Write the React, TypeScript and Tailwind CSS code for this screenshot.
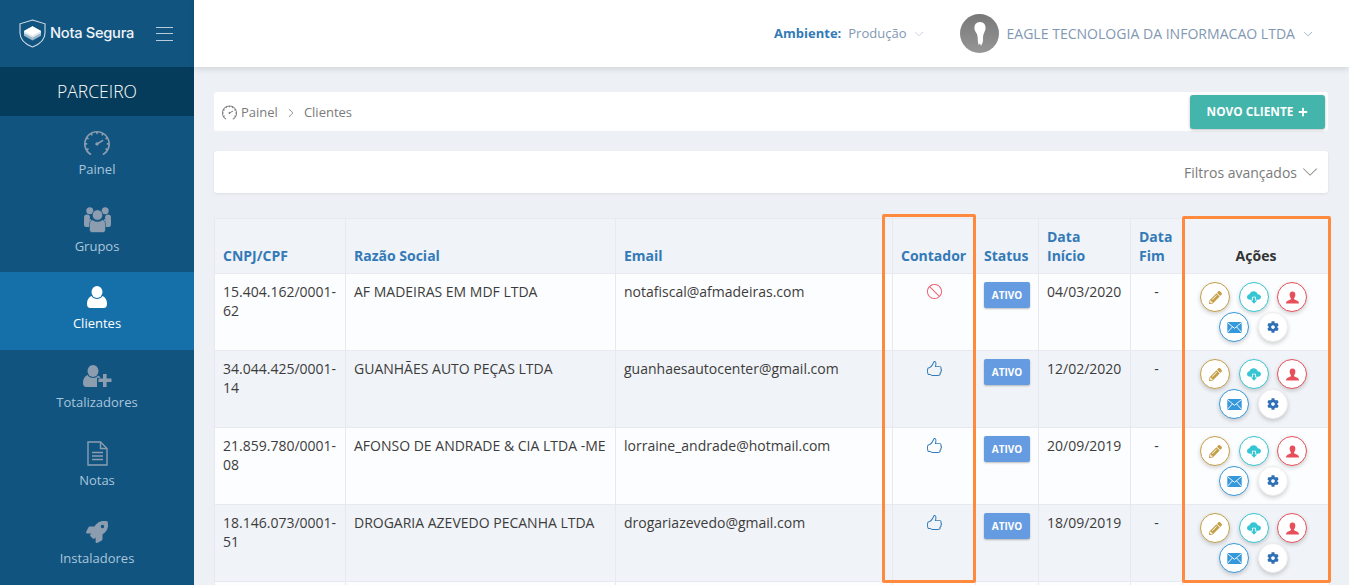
import React from "react";
import { FaRocket, FaPencilAlt, FaCog, FaPlus } from "react-icons/fa";
import { SlSpeedometer, SlLike, SlBan, SlArrowDown, SlArrowRight } from "react-icons/sl";

function UsersIcon() {
  return (
    <svg width="27" height="26" viewBox="0 0 27 26" fill="currentColor">
      <circle cx="5.800" cy="3.800" r="3.500" />
      <circle cx="21.200" cy="3.800" r="3.500" />
      <circle cx="3" cy="10.500" r="3" />
      <circle cx="24" cy="10.500" r="3" />
      <circle cx="13.500" cy="8" r="5.300" fill="currentColor" stroke="#125480" strokeWidth="0.800" />
      <path d="M0 12 C3 13 5 13 7 12 L7 20 H2 C0.500 20 0 19 0 17 Z M27 12 C24 13 22 13 20 12 V20 H25 C26.500 20 27 19 27 17 Z" />
      <path d="M5.500 17 C5.500 14.500 7 13 8.500 12.800 C10 14 11.500 14.500 13.500 14.500 C15.500 14.500 17 14 18.500 12.800 C20 13 21.500 14.500 21.500 17 V22.500 C21.500 24.500 20.500 25.500 19 25.500 H8 C6.500 25.500 5.500 24.500 5.500 22.500 Z" stroke="#125480" strokeWidth="0.600" />
    </svg>
  );
}

function UserIcon() {
  return (
    <svg width="20" height="22" viewBox="0 0 20 22" fill="currentColor">
      <ellipse cx="10" cy="6" rx="5.500" ry="6" />
      <path d="M0 17.500 C0 13.500 2 11 4.500 10 C6 12.200 8 13 10 13 C12 13 14 12.200 15.500 10 C18 11 20 13.500 20 17.500 C20 20.500 19 22 16.500 22 H3.500 C1 22 0 20.500 0 17.500 Z" />
    </svg>
  );
}

function UserPlusIcon() {
  return (
    <svg width="29" height="22" viewBox="0 0 29 22" fill="currentColor">
      <ellipse cx="10" cy="6" rx="5.500" ry="6" />
      <path d="M0 17.500 C0 13.500 2 11 4.500 10 C6 12.200 8 13 10 13 C11.800 13 13.500 12.400 15 10.600 C16 11 17 11.800 17.800 12.800 H14 V21 C14 21.500 14 21.800 14.300 22 H3.500 C1 22 0 20.500 0 17.500 Z" />
      <path d="M20 9 H23.600 V13.500 H28.500 V17 H23.600 V22 H20 V17 H15.500 V13.500 H20 Z" />
    </svg>
  );
}

function FileIcon() {
  return (
    <svg width="21" height="25" viewBox="0 0 21 25" fill="none" stroke="currentColor" strokeWidth="1.400">
      <path d="M1 1 H13.500 L20 7.500 V24 H1 Z" />
      <path d="M13.500 1 V7.500 H20" />
      <path d="M5 11.500 H16 M5 15 H16 M5 18.500 H16" strokeWidth="1.500" />
    </svg>
  );
}

function CloudArrow() {
  return (
    <svg width="14" height="13" viewBox="0 0 18 16" fill="currentColor">
      <path d="M4 11 C1.800 11 0 9.500 0 7.400 C0 5.500 1.400 4 3.200 3.800 C4 1.500 6 0 8.500 0 C11 0 13 1.500 13.700 3.800 C16 3.800 18 5.300 18 7.500 C18 9.500 16.200 11 14 11 H11.500 V7 H6.500 V11 Z" />
      <path d="M7.500 8 H10.500 V12 H13 L9 16 L5 12 H7.500 Z" />
    </svg>
  );
}

function Bust() {
  return (
    <svg width="13" height="13" viewBox="0 0 16 15" fill="currentColor">
      <path d="M8 0 C10.500 0 11.800 2 11.500 4.500 C11.300 6.500 10.500 8 9.800 8.800 C9.800 9.800 10.500 10.200 12.500 10.800 C14.800 11.500 16 12.500 16 15 H0 C0 12.500 1.200 11.500 3.500 10.800 C5.500 10.200 6.200 9.800 6.200 8.800 C5.500 8 4.700 6.500 4.500 4.500 C4.200 2 5.500 0 8 0 Z" />
    </svg>
  );
}

function Mail() {
  return (
    <svg width="15" height="11" viewBox="0 0 17 13" fill="currentColor">
      <rect width="17" height="13" />
      <path d="M0 0.500 L8.500 7.500 L17 0.500 M0 12.500 L6 5.800 M17 12.500 L11 5.800" fill="none" stroke="#fff" strokeWidth="1.100" />
    </svg>
  );
}

const nav = [
  { label: "Painel", icon: <SlSpeedometer size={26} className="translate-y-[1px]" />, h: "h-[32px]" },
  { label: "Grupos", icon: <UsersIcon />, h: "h-[31px]" },
  { label: "Clientes", icon: <UserIcon />, h: "h-[30px]" },
  { label: "Totalizadores", icon: <UserPlusIcon />, h: "h-[31px]" },
  { label: "Notas", icon: <FileIcon />, h: "h-[31px]" },
  { label: "Instaladores", icon: <FaRocket size={22} />, h: "h-[31px]" },
];

const rows = [
  { cnpj: "15.404.162/0001-62", name: "AF MADEIRAS EM MDF LTDA", email: "notafiscal@afmadeiras.com", ok: false, date: "04/03/2020" },
  { cnpj: "34.044.425/0001-14", name: "GUANHÃES AUTO PEÇAS LTDA", email: "guanhaesautocenter@gmail.com", ok: true, date: "12/02/2020" },
  { cnpj: "21.859.780/0001-08", name: "AFONSO DE ANDRADE & CIA LTDA -ME", email: "lorraine_andrade@hotmail.com", ok: true, date: "20/09/2019" },
  { cnpj: "18.146.073/0001-51", name: "DROGARIA AZEVEDO PECANHA LTDA", email: "drogariazevedo@gmail.com", ok: true, date: "18/09/2019" },
  { cnpj: "", name: "", email: "", ok: true, date: "", empty: true },
];

function Logo() {
  return (
    <svg width="27" height="29" viewBox="0 0 27 29" fill="none">
      <path d="M13.500 1 L26 4.800 V14 C26 21 20 25.500 13.500 28 C7 25.500 1 21 1 14 V4.800 Z" stroke="#cfdbe5" strokeWidth="1.100" />
      <path d="M5 14.500 L13.500 19 L22 14.500 V16.800 L13.500 21.500 L5 16.800 Z" fill="#9fb8cb" />
      <path d="M5 12 L13.500 7.200 L22 12 V14.500 L13.500 19 L5 14.500 Z" fill="#dfe8ef" />
      <path d="M5 12 L13.500 7.200 L22 12 L13.500 16.500 Z" fill="#ffffff" />
    </svg>
  );
}

function ActionBtn({ cls, children }: { cls: string; children: React.ReactNode }) {
  return (
    <span className={`flex h-[30px] w-[30px] items-center justify-center rounded-full border bg-white shadow-[0_2px_4px_rgba(0,0,0,0.18)] ${cls}`}>
      {children}
    </span>
  );
}

const th = "border border-[#e6eaf0] px-[8px] pb-[8px] align-bottom text-[14px] font-bold leading-[19px]";
const td = "border border-[#e6eaf0] px-[8px] pt-[8px] align-top text-[14px] leading-[19px] text-[#3c3c3c]";

export default function App() {
  const headers = ["CNPJ/CPF", "Razão Social", "Email", "Contador", "Status"];
  return (
    <div className="flex h-[585px] w-[1349px] overflow-hidden bg-[#edf1f5] font-['Open_Sans','Noto_Sans',sans-serif]">
      <aside className="w-[194px] shrink-0 bg-[#125480]">
        <div className="flex h-[67px] items-center pl-[19px]">
          <Logo />
          <span className="ml-[4px] font-['Inter',sans-serif] text-[14.700px] font-medium tracking-[-0.300px] text-[#eef3f7]">Nota Segura</span>
          <span className="ml-[22px] flex h-[14px] w-[17px] flex-col justify-between">
            <span className="h-px bg-[#b9cad8]" />
            <span className="h-px bg-[#b9cad8]" />
            <span className="h-px bg-[#b9cad8]" />
          </span>
        </div>
        <div className="flex h-[49px] items-center justify-center bg-[#063c5b] text-[17.500px] font-light text-white">PARCEIRO</div>
        <nav>
          {nav.map((n) => (
            <div
              key={n.label}
              className={`flex h-[78px] flex-col items-center pt-[10px] text-[13px] ${n.label === "Clientes" ? "bg-[#1570aa] text-white" : "text-[#a9c6dc]"}`}
            >
              <span className={`flex items-center ${n.h} ${n.label === "Clientes" ? "text-white" : "text-[#8c9db0]"}`}>{n.icon}</span>
              <span className="mt-[2px] leading-[18px]">{n.label}</span>
            </div>
          ))}
        </nav>
      </aside>

      <div className="relative min-w-0 flex-1">
        <header className="flex h-[67px] items-center justify-end bg-white pr-[37px] text-[#8198b3] shadow-[0_2px_6px_rgba(0,0,0,0.12)]">
          <span className="text-[13px] font-bold text-[#337ab7]">Ambiente:</span>
          <span className="ml-[7px] text-[13px]">Produção</span>
          <SlArrowDown size={8} className="ml-[9px] text-[#b8c5d4]" />
          <span className="ml-[37px] flex h-[39px] w-[39px] items-center justify-center overflow-hidden rounded-full bg-gradient-to-b from-[#787878] to-[#969696]">
            <svg width="14" height="24" viewBox="0 0 14 24">
              <path d="M7 0 C11 0 13 3 12.500 7 C12 10 10 12 10 15 C10 18 10.500 20 8 24 L7 21.500 L5.500 23 C4.500 19 5 17 4.500 14 C4 11 2 10 1.500 7 C1 3 3 0 7 0 Z" fill="#fff" />
            </svg>
          </span>
          <span className="ml-[7px] text-[14.050px]">EAGLE TECNOLOGIA DA INFORMACAO LTDA</span>
          <SlArrowDown size={8} className="ml-[9px]" />
        </header>

        <main className="pl-[20px] pr-[20px] pt-[25px]">
          <div className="mr-[1px] flex h-[39px] items-center justify-between rounded-[3px] bg-white pl-[8px] pr-[3px] text-[13px] text-[#7b7b7b]">
            <div className="flex items-center pt-[2px]">
              <SlSpeedometer size={15} />
              <span className="ml-[4px]">Painel</span>
              <SlArrowRight size={8} className="mx-[9px]" />
              <span>Clientes</span>
            </div>
            <button className="flex h-[34px] w-[135px] items-center justify-center gap-[5px] rounded-[3px] bg-[#43b5ab] pt-[1px] text-[11.800px] font-bold text-white shadow-[0_1px_3px_rgba(0,0,0,0.25)]">
              NOVO CLIENTE <FaPlus size={10} />
            </button>
          </div>

          <div className="mr-[1px] mt-[20px] flex h-[42px] items-center justify-end rounded-[3px] bg-white pr-[11px] text-[14px] text-[#7b7b7b] shadow-[0_1px_3px_rgba(0,0,0,0.08)]">
            Filtros avançados
            <SlArrowDown size={14} className="ml-[6px] text-[#8f8f8f]" />
          </div>

          <table className="mt-[25px] w-[1115px] table-fixed border-collapse">
            <colgroup>
              <col className="w-[131px]" />
              <col className="w-[270px]" />
              <col className="w-[277px]" />
              <col className="w-[83px]" />
              <col className="w-[63px]" />
              <col className="w-[92px]" />
              <col className="w-[52px]" />
              <col className="w-[147px]" />
            </colgroup>
            <thead>
              <tr className="h-[55px] bg-[#f0f3f7]">
                {headers.map((h) => (
                  <th key={h} className={`${th} text-left text-[#337ab7]`}>{h}</th>
                ))}
                <th className={`${th} text-left text-[#337ab7]`}>Data<br />Início</th>
                <th className={`${th} text-left text-[#337ab7]`}>Data<br />Fim</th>
                <th className={`${th} text-center text-[#333333]`}>Ações</th>
              </tr>
            </thead>
            <tbody>
              {rows.map((r, i) => (
                <tr key={i} className={`h-[77px] ${i % 2 === 0 ? "bg-[#fcfdfe]" : "bg-[#f0f3f7]"}`}>
                  <td className={td}>{r.cnpj}</td>
                  <td className={td}>{r.name}</td>
                  <td className={td}>{r.email}</td>
                  <td className={`${td} text-center`}>
                    {!r.empty && (
                      <span className="flex justify-center pt-[2px]">
                        {r.ok ? <SlLike size={15} className="text-[#337ab7]" /> : <SlBan size={15} className="text-[#ee5e6f]" />}
                      </span>
                    )}
                  </td>
                  <td className={td}>
                    {!r.empty && (
                      <span className="flex h-[26px] w-[46px] items-center justify-center rounded-[2px] bg-[#659be0] text-[10px] font-bold text-white shadow-[0_1px_2px_rgba(0,0,0,0.25)]">ATIVO</span>
                    )}
                  </td>
                  <td className={td}>{r.date}</td>
                  <td className={`${td} text-center`}>{!r.empty && "-"}</td>
                  <td className="border border-[#e6eaf0] pl-[8px] pr-[13px] pt-[8px] align-top">
                    {!r.empty && (
                      <div className="flex flex-wrap justify-center gap-x-[8.500px]">
                        <ActionBtn cls="border-[#c49f47] text-[#c49f47]"><FaPencilAlt size={13} /></ActionBtn>
                        <ActionBtn cls="border-[#36c6d3] text-[#36c6d3]"><CloudArrow /></ActionBtn>
                        <ActionBtn cls="border-[#e7505a] text-[#e7505a]"><Bust /></ActionBtn>
                        <ActionBtn cls="border-[#3598dc] text-[#3598dc]"><Mail /></ActionBtn>
                        <ActionBtn cls="border-[#eeeeee] text-[#2f6fb4]"><FaCog size={12} /></ActionBtn>
                      </div>
                    )}
                  </td>
                </tr>
              ))}
            </tbody>
          </table>
        </main>

        <div className="pointer-events-none absolute left-[688px] top-[214px] h-[369px] w-[94px] rounded-[2px] border-[3px] border-[#ff8a3d]" />
        <div className="pointer-events-none absolute left-[988px] top-[216px] h-[367px] w-[149px] rounded-[2px] border-[3px] border-[#ff8a3d]" />
      </div>
    </div>
  );
}
